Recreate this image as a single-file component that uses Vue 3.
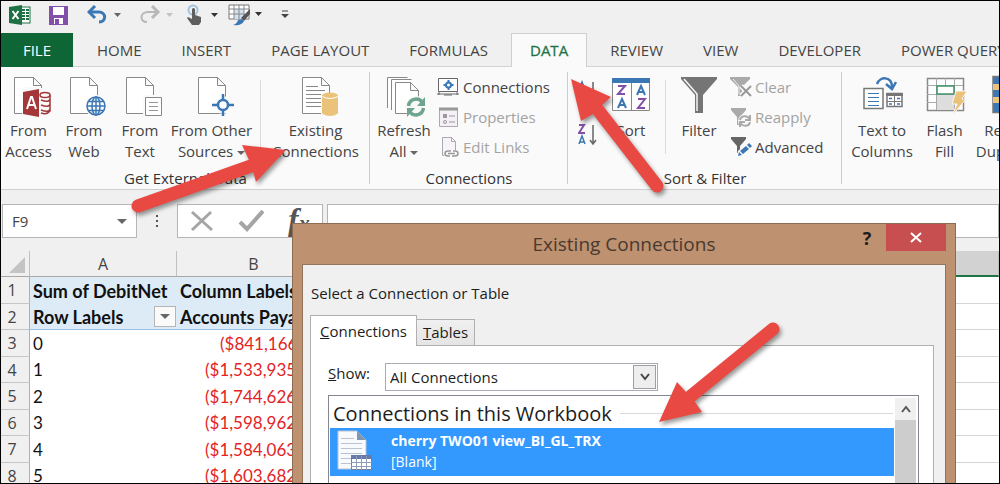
<script setup>
import { ref } from 'vue'

const tabNames = ['HOME', 'INSERT', 'PAGE LAYOUT', 'FORMULAS', 'DATA', 'REVIEW', 'VIEW', 'DEVELOPER', 'POWER QUERY']
const activeTab = ref('DATA')
const cellName = ref('F9')
const formula = ref('')
const show = ref('All Connections')
const rows = [
  { n: 3, a: '0', b: '($841,166.34)' },
  { n: 4, a: '1', b: '($1,533,935.12)' },
  { n: 5, a: '2', b: '($1,744,626.40)' },
  { n: 6, a: '3', b: '($1,598,962.08)' },
  { n: 7, a: '4', b: '($1,584,063.51)' },
  { n: 8, a: '5', b: '($1,603,682.77)' }
]
</script>

<template>
  <div class="window">
    <header class="quick">
      <svg class="q-logo" width="22" height="20" viewBox="0 0 22 20">
        <rect x="11" y="2" width="10" height="16" fill="#fff" stroke="#1e7145" />
        <path d="M13 5h3M17 5h3M13 8h3M17 8h3M13 11h3M17 11h3M13 14h3M17 14h3" stroke="#1e7145" stroke-width="2" />
        <path d="M0 2 13 0v20L0 18z" fill="#1e7145" />
        <path d="M3.500 6 9.500 14M9.500 6 3.500 14" stroke="#fff" stroke-width="2" />
      </svg>
      <button class="q-btn q-save" aria-label="Save">
        <svg width="19" height="19" viewBox="0 0 19 19">
          <path d="M0 0h19v19H0z" fill="#8250a8" />
          <path d="M4 1h11v8H4z" fill="#fff" />
          <path d="M5 12h9v6H5z" fill="#fff" /><path d="M6 13h4v5H6z" fill="#8250a8" />
        </svg>
      </button>
      <button class="q-btn q-undo" aria-label="Undo">
        <svg width="34" height="20" viewBox="0 0 34 20">
          <path d="M3 7h9c7 0 8 10 0 10" fill="none" stroke="#3b77b5" stroke-width="3" />
          <path d="M8 1 2 7l6 6" fill="none" stroke="#3b77b5" stroke-width="3" />
          <path d="M27 8h7l-3.500 4z" fill="#666" />
        </svg>
      </button>
      <button class="q-btn q-redo" aria-label="Redo">
        <svg width="34" height="20" viewBox="0 0 34 20">
          <path d="M17 7H9C1 7 0 17 8 17" fill="none" stroke="#b8b8b8" stroke-width="2" />
          <path d="m13 1 6 6-6 6" fill="none" stroke="#b8b8b8" stroke-width="3" />
          <path d="M27 8h7l-3.500 4z" fill="#c4c4c4" />
        </svg>
      </button>
      <button class="q-btn q-touch" aria-label="Touch mode">
        <svg width="32" height="22" viewBox="0 0 32 22">
          <circle cx="7" cy="6" r="4.500" fill="none" stroke="#9fc3e3" stroke-width="2" />
          <path d="M6 5q1.500-2 3 0v6l6 2v5l-2 3H6L1 14l1-1 4 2z" fill="#5f5f5f" />
          <path d="M25 9h7l-3.500 4z" fill="#333" />
        </svg>
      </button>
      <button class="q-btn q-table" aria-label="Table design">
        <svg width="34" height="22" viewBox="0 0 34 22">
          <path d="M1 1h20v14H1z" fill="#fff" stroke="#777" />
          <path d="M6 5h10v10H6z" fill="#cfe0f0" />
          <path d="M1 5h20M1 10h16M6 1v14M11 1v14M16 1v12" stroke="#888" fill="none" />
          <path d="m13 14 9-9v5l-6 7z" fill="#555" />
          <path d="M5 21q4-1 5-5 5-2 6 1-2 5-11 4z" fill="#3b77b5" />
          <path d="M27 8h7l-3.500 4z" fill="#333" />
        </svg>
      </button>
      <button class="q-btn q-more" aria-label="Customize toolbar">
        <svg width="8" height="10" viewBox="0 0 8 10"><path d="M1 1h6" stroke="#444" /><path d="M0 4h8L4 8z" fill="#444" /></svg>
      </button>
    </header>

    <nav class="tabs">
      <button class="file">FILE</button>
      <button v-for="t in tabNames" :key="t" class="tab" :class="{ active: t === activeTab }" @click="activeTab = t">{{ t }}</button>
    </nav>

    <section class="ribbon">
      <div class="group g-external">
        <div class="tools">
          <button class="big w-55">
            <svg width="44" height="42" viewBox="0 0 44 42">
              <path class="page" d="M7.500 2.500h19l8 8v28h-27zM26.500 2.500v8h8" />
              <path d="M15 12h29v30H15z" fill="#fafafa" />
              <path class="page" d="M15 2.500h11.500l8 8V13M26.500 2.500v8h8" />
              <ellipse cx="38" cy="20" rx="5" ry="2.500" fill="none" stroke="#a4373a" stroke-width="1.500" />
              <path d="M34 25q8 3 9-1M34 30q8 3 9-1M34 35q8 3 9-1M43 20v16q-3 4-9 2" fill="none" stroke="#a4373a" stroke-width="1.500" />
              <path d="m16 17 16-3v28l-16-3z" fill="#a4373a" />
              <path d="m20 34 4-12h1l4 12M21.500 30h6" fill="none" stroke="#fff" stroke-width="2" />
            </svg>From<br>Access
          </button>
          <button class="big w-56">
            <svg width="44" height="42" viewBox="0 0 44 42">
              <path class="page" d="M8.500 2.500h19l8 8v28h-27zM27.500 2.500v8h8" />
              <circle cx="34" cy="31" r="11" fill="#fafafa" />
              <g fill="none" stroke="#3b77b5" stroke-width="1.500"><circle cx="34" cy="31" r="9" /><ellipse cx="34" cy="31" rx="4" ry="9" /><path d="M34 22v18M25 31h18M26 26.500h16M26 35.500h16" /></g>
            </svg>From<br>Web
          </button>
          <button class="big w-56">
            <svg width="44" height="42" viewBox="0 0 44 42">
              <path class="page" d="M8.500 2.500h19l8 8v28h-27zM27.500 2.500v8h8" />
              <path d="M25 20h19v22H25z" fill="#fafafa" />
              <path class="page" d="M27.500 22.500h16v18h-16z" />
              <path d="M31 27.500h9M31 31.500h9M31 35.500h9" stroke="#999" />
            </svg>From<br>Text
          </button>
          <button class="big w-87">
            <svg width="44" height="42" viewBox="0 0 44 42">
              <path class="page" d="M8.500 2.500h19l8 8v28h-27zM27.500 2.500v8h8" />
              <circle cx="33" cy="30" r="9" fill="#fafafa" />
              <path d="M33 19v6M33 35v6M22 30h6M38 30h6" stroke="#3b77b5" stroke-width="2.500" />
              <circle cx="33" cy="30" r="5" fill="#fff" stroke="#3b77b5" stroke-width="2.500" />
            </svg>From Other<br>Sources <i class="caret"></i>
          </button>
          <span class="rule"></span>
          <button class="big w-99">
            <svg width="44" height="42" viewBox="0 0 44 42">
              <path class="page" d="M8.500 2.500h19l8 8v28h-27zM27.500 2.500v8h8" />
              <path d="M12 11.500h12M12 15.500h19M12 19.500h19M12 23.500h16M12 27.500h16M12 31.500h16" stroke="#888" />
              <path d="M27 18h17v24H27z" fill="#fafafa" />
              <path d="M28 20.500v18q8 5 16 0v-18z" fill="#eac27a" />
              <ellipse cx="36" cy="20.500" rx="8" ry="3" fill="#eac27a" />
              <path d="M28 21.500q8 4 16 0" fill="none" stroke="#fff" />
            </svg>Existing<br>Connections
          </button>
        </div>
        <h2>Get External Data</h2>
      </div>

      <div class="group g-conn">
        <div class="tools">
          <button class="big w-58">
            <svg width="44" height="42" viewBox="0 0 44 42">
              <path d="M5.500 33V2.500h20M9.500 35V4.500h20" class="page" />
              <path class="page" d="M13.500 7.500h15l8 8v23h-23zM28.500 7.500v8h8" />
              <circle cx="34" cy="32" r="11" fill="#fafafa" />
              <g fill="none" stroke="#6fa58e" stroke-width="3.500"><path d="M26.500 31c1-8 11-9 14-3M41.500 33c-1 8-11 9-14 3" /></g>
              <path d="M43 22v9h-8zM25 42v-9h8z" fill="#6fa58e" />
            </svg>Refresh<br>All <i class="caret"></i>
          </button>
          <div class="smalls">
            <button class="small">
              <svg width="22" height="22" viewBox="0 0 22 22"><path d="M1.500 2.500h19v13h-19z" fill="#fff" stroke="#666" /><path d="M0 18h22M2 16v3M20 16v3M7 19h8" stroke="#666" /><circle cx="11.500" cy="9" r="2.500" fill="none" stroke="#3b77b5" stroke-width="2" /><path d="M11.500 4v2M11.500 12v2M6.500 9h2M14.500 9h2" stroke="#3b77b5" stroke-width="2" /></svg>
              Connections
            </button>
            <button class="small" disabled>
              <svg width="22" height="22" viewBox="0 0 22 22"><path d="M2.500 2.500h18v18h-18z" fill="#f5eff7" stroke="#aaa" /><path d="M2 3h19" stroke="#999" stroke-width="3" /><path d="M12 10h6M12 16h6" stroke="#999" stroke-width="1" /><path d="M6 8h4v4H6z" fill="#999" /><circle cx="8" cy="16" r="1.500" fill="none" stroke="#999" /></svg>
              Properties
            </button>
            <button class="small" disabled>
              <svg width="22" height="22" viewBox="0 0 22 22"><path d="M5.500 1.500h9l4 4v14h-13zM14.500 1.500v4h4" fill="#f8f2fa" stroke="#aaa" /><path d="M7 14h15v7H7z" fill="#fafafa" /><g fill="none" stroke="#999" stroke-width="1.500"><path d="M14 15h-3q-3 0-3 2.500t3 2.500h2" /><path d="M15 20h3q3 0 3-2.500t-3-2.500h-2M11 17.500h7" /></g></svg>
              Edit Links
            </button>
          </div>
        </div>
        <h2>Connections</h2>
      </div>

      <div class="group g-sort">
        <div class="tools">
          <div class="pair">
            <button class="az" aria-label="Sort A to Z">
              <svg width="20" height="24" viewBox="0 0 20 24"><path d="M1 10 4 2l3 8M2 8h4" fill="none" stroke="#3b77b5" stroke-width="1.500" /><path d="M1 13h5l-5 8h6" fill="none" stroke="#8250a8" stroke-width="1.500" /><path d="M15 2v18M12 17l3 4 3-4" fill="none" stroke="#666" stroke-width="1.500" /></svg>
            </button>
            <button class="az" aria-label="Sort Z to A">
              <svg width="20" height="24" viewBox="0 0 20 24"><path d="M1 3h5l-5 8h6" fill="none" stroke="#8250a8" stroke-width="2" /><path d="M1 22l3-8 3 8M2 20h4" fill="none" stroke="#3b77b5" stroke-width="1.500" /><path d="M15 3v18M12 18l3 4 3-4" fill="none" stroke="#666" stroke-width="1.500" /></svg>
            </button>
          </div>
          <button class="big w-58">
            <svg width="44" height="42" viewBox="0 0 44 42">
              <path d="M3.500 4.500h37v31h-37zM22.500 8v28" fill="#fff" stroke="#888" />
              <path d="M3 3h38v5H3z" fill="#3b77b5" />
              <g fill="none" stroke-width="2"><path d="M9 11h7l-7 8h7M29 24h7l-7 9h7" stroke="#8250a8" /><path d="m9 33 4-9 4 9M10 30h6M28 20l4-9 4 9M29 17h6" stroke="#3b77b5" /></g>
            </svg>Sort
          </button>
          <span class="rule"></span>
          <button class="big w-56">
            <svg width="44" height="42" viewBox="0 0 44 42">
              <path d="M4 2h36v2L26 20v18h-8V20L4 4z" fill="#757575" />
              <path d="m7 4 13 15v17" stroke="#f5f5f5" stroke-width="1.500" fill="none" />
            </svg>Filter
          </button>
          <div class="smalls">
            <button class="small" disabled>
              <svg width="22" height="22" viewBox="0 0 22 22"><path d="M0 1h20v2l-8 8v9H8v-9L0 3z" fill="#aaa" /><path d="m3 3 6 7v8" stroke="#eee" fill="none" /><path d="m11 10 10 10M21 10 11 20" stroke="#fafafa" stroke-width="5" /><path d="m11 10 10 10M21 10 11 20" stroke="#999" stroke-width="2" /></svg>
              Clear
            </button>
            <button class="small" disabled>
              <svg width="22" height="22" viewBox="0 0 22 22"><path d="M1 2h15v2l-6 7v8H7v-8L1 4z" fill="#aaa" /><circle cx="15" cy="15" r="7" fill="#fafafa" /><path d="M10 14c1-5 8-5 10 0M20 9v5h-5M20 16c-1 5-8 5-10 0M10 21v-5h5" stroke="#aaa" stroke-width="2" fill="none" /></svg>
              Reapply
            </button>
            <button class="small">
              <svg width="22" height="22" viewBox="0 0 22 22"><path d="M1 1h15v2l-6 7v7H7v-7L1 3z" fill="#666" /><path d="m7 20 1-5 9-8 4 3-9 9z" fill="#fafafa" /><path d="m8 20 1-4 3 3zM10 15l6-5 3 3-6 5zM17 9l2-2 3 3-2 2z" fill="#3b77b5" /></svg>
              Advanced
            </button>
          </div>
        </div>
        <h2>Sort &amp; Filter</h2>
      </div>

      <div class="group g-data">
        <div class="tools">
          <button class="big w-72">
            <svg width="44" height="42" viewBox="0 0 44 42">
              <path d="M4 13.500h19v20H4z" fill="#fff" stroke="#777" stroke-width="1.500" />
              <path d="M8 18.500h11M8 22.500h11M8 26.500h11M8 30.500h11" stroke="#3b77b5" />
              <path d="M27 18.500h15v13H27z" fill="#fff" stroke="#777" stroke-width="1.500" /><path d="M26 18h17v3H26z" fill="#777" />
              <path d="M34.500 20v12M27 26.500h15" stroke="#777" /><path d="M29 23.500h3M37 23.500h3M29 29h3M37 29h3" stroke="#3b77b5" stroke-width="1.500" />
              <path d="M17 9c3-8 15-8 15 3M26 9l6 5 4-7" fill="none" stroke="#3b77b5" stroke-width="2.500" />
            </svg>Text to<br>Columns
          </button>
          <button class="big w-53">
            <svg width="44" height="42" viewBox="0 0 44 42">
              <path d="M4.500 3.500h36v32h-36z" fill="#fff" stroke="#888" stroke-width="1.500" />
              <path d="M4 10.500h36M4 19.500h36M4 27.500h36M13.500 3v32M31.500 3v32M22.500 3v7" stroke="#aaa" fill="none" />
              <path d="M14 20h17v15H14z" fill="#ddd" /><path d="M14 11h17v8H14z" fill="#fff" stroke="#3f9268" stroke-width="1.500" />
              <path d="M33 16h11l-5 8h4L29 41l5-12h-5z" fill="#eac27a" stroke="#fafafa" />
            </svg>Flash<br>Fill
          </button>
          <button class="big w-83">
            <svg width="44" height="42" viewBox="0 0 44 42">
              <path d="M2 1.500h40v36H2z" fill="#3b77b5" stroke="#777" stroke-width="1.500" />
              <path d="M2 9h16v6H2zM2 22h16v6H2z" fill="#eac27a" />
            </svg>Remove<br>Duplicates
          </button>
        </div>
      </div>
    </section>

    <section class="formula-bar">
      <div class="name-box">
        <input v-model="cellName" aria-label="Name box">
        <i class="caret"></i>
      </div>
      <svg class="dots" width="40" height="34" viewBox="0 0 40 34"><path d="M19 11h2v2h-2zM19 16h2v2h-2zM19 21h2v2h-2z" fill="#555" /></svg>
      <div class="edit-box">
        <button aria-label="Cancel"><svg width="24" height="22" viewBox="0 0 24 22"><path d="M2 2 22 20M21 2 2 20" stroke="#a5a5a5" stroke-width="3" /></svg></button>
        <button aria-label="Enter"><svg width="26" height="22" viewBox="0 0 26 22"><path d="m2 12 7 7L25 1" fill="none" stroke="#a5a5a5" stroke-width="4" /></svg></button>
        <button class="fx" aria-label="Insert function">f<small>x</small></button>
      </div>
      <input v-model="formula" class="formula" aria-label="Formula">
    </section>

    <table class="sheet">
      <thead>
        <tr>
          <th class="corner"><svg width="16" height="16" viewBox="0 0 16 16"><path d="M16 0v16H0z" fill="#c4c4c4" /></svg></th>
          <th class="col-a">A</th>
          <th class="col-b">B</th>
          <th class="rest"></th>
        </tr>
      </thead>
      <tbody>
        <tr class="pivot">
          <th>1</th><td>Sum of DebitNet</td><td>Column Labels</td><td></td>
        </tr>
        <tr class="pivot">
          <th>2</th>
          <td><div class="label-cell">Row Labels<button class="drop" aria-label="Filter rows"><i class="caret"></i></button></div></td>
          <td>Accounts Payable</td><td></td>
        </tr>
        <tr v-for="r in rows" :key="r.n">
          <th>{{ r.n }}</th><td>{{ r.a }}</td><td class="neg">{{ r.b }}</td><td></td>
        </tr>
      </tbody>
    </table>

    <div class="dialog" role="dialog" aria-label="Existing Connections">
      <div class="title-bar">
        <h1>Existing Connections</h1>
        <div class="title-actions">
          <button class="help" aria-label="Help">?</button>
          <button class="close" aria-label="Close"><svg width="12" height="11" viewBox="0 0 12 11"><path d="m1 1 10 9M11 1 1 10" stroke="#fff" stroke-width="2" /></svg></button>
        </div>
      </div>
      <div class="panel">
        <p>Select a Connection or Table</p>
        <div class="dlg-tabs">
          <button class="dlg-tab on"><u>C</u>onnections</button>
          <button class="dlg-tab"><u>T</u>ables</button>
        </div>
        <div class="tab-page">
          <div class="show-row">
            <label for="show"><u>S</u>how:</label>
            <div class="picker">
              <select id="show" v-model="show"><option>All Connections</option></select>
              <span class="picker-arrow"><svg width="10" height="8" viewBox="0 0 10 8"><path d="m1 1 4 5 4-5" fill="none" stroke="#444" stroke-width="2" /></svg></span>
            </div>
          </div>
          <div class="list">
            <div class="items">
              <h3>Connections in this Workbook</h3>
              <button class="item">
                <svg width="36" height="42" viewBox="0 0 36 42">
                  <path d="M1 1h19l9 9v29H1z" fill="#f8fafd" stroke="#b8c4d4" /><path d="M20 1v9h9z" fill="#7f95b2" />
                  <path d="M4 8.500h13M4 13.500h21M4 18.500h21M4 23.500h21M4 28.500h10M4 33.500h10" stroke="#b9c3d3" />
                  <path d="M14.500 25.500h20v14h-20z" fill="#fff" stroke="#6f7f9a" /><path d="M14 25h21v4H14z" fill="#6679a8" />
                  <path d="M19.500 26v14M24.500 26v14M29.500 26v14M14 32.500h21M14 36.500h21" stroke="#8f9cb5" />
                </svg>
                <span class="item-text"><b>cherry TWO01 view_BI_GL_TRX</b><span>[Blank]</span></span>
              </button>
            </div>
            <div class="scroll">
              <button aria-label="Scroll up"><svg width="10" height="8" viewBox="0 0 10 8"><path d="m1 7 4-5 4 5" fill="none" stroke="#555" stroke-width="2" /></svg></button>
              <div class="thumb"></div>
            </div>
          </div>
        </div>
      </div>
    </div>

    <svg class="arrows" width="1000" height="484" viewBox="0 0 1000 484">
      <g fill="#e84a43" stroke="#e84a43" stroke-width="13" stroke-linecap="round">
        <path d="M138 206 251 166" /><path stroke="none" d="m286 150-44-5 7 15 4 11 3 11z" />
        <path d="M657 186 598 110" /><path stroke="none" d="m571 79 40 18-9 8-9 9-12 7z" />
        <path d="M773 329 691 396" /><path stroke="none" d="m659 422 18-40 9 10 9 10 7 10z" />
      </g>
    </svg>
  </div>
</template>

<style>
html, body { margin: 0; }
</style>

<style scoped>
* { box-sizing: border-box; }
.window {
  position: relative;
  display: flex;
  flex-direction: column;
  height: 100vh;
  overflow: hidden;
  border: 1px solid #000;
  background: #f0f0f0;
  color: #444;
  font: 15px/21px "Open Sans", "Noto Sans", sans-serif;
}
button { padding: 0; border: 0; background: none; color: inherit; font: inherit; white-space: nowrap; }
input, select { font: inherit; color: inherit; }
h1, h2, h3, p { margin: 0; font-weight: 400; }
svg { display: block; flex: none; }

.quick { display: flex; align-items: center; flex: none; height: 32px; padding: 0 8px 4px; }
.q-save { margin-left: 18px; }
.q-undo { margin-left: 19px; }
.q-redo { margin-left: 18px; }
.q-touch { margin-left: 13px; }
.q-table { margin-left: 10px; }
.q-more { margin-left: 19px; }

.tabs { display: flex; flex: none; height: 34px; overflow: hidden; box-shadow: inset 0 -1px #d2d2d2; }
.file { flex: none; width: 72px; background: #0e6636; color: #fff; }
.tab { flex: none; padding: 0 19px; border: 1px solid transparent; }
.file + .tab { margin-left: 4px; }
.tab.active { margin: 0 3px; padding: 0 18px; border-color: #cfcfcf; border-bottom: 0; background: #fafafa; color: #217346; -webkit-text-stroke: 0.3px; }

.ribbon { display: flex; flex: none; height: 123px; overflow: hidden; border-bottom: 1px solid #cfcfcf; background: #fafafa; }
.group { display: flex; flex-direction: column; flex: none; position: relative; padding-top: 8px; }
.group:not(.g-data)::after { content: ""; position: absolute; right: 0; top: 5px; bottom: 5px; width: 1px; background: #cbcbcb; }
.g-external { width: 369px; }
.g-conn { width: 198px; }
.g-sort { width: 274px; }
.tools { display: flex; height: 93px; }
.g-conn .tools { padding-left: 5px; }
.g-sort .tools { padding-left: 10px; }
.g-data .tools { padding-left: 4px; }
.group h2 { font-size: 15px; line-height: 20px; text-align: center; color: #333; }
.big { display: block; flex: none; align-self: flex-start; text-align: center; }
.big svg { margin: 0 auto 3px; }
.w-53 { width: 53px; } .w-55 { width: 55px; } .w-56 { width: 56px; } .w-58 { width: 58px; }
.w-72 { width: 72px; } .w-83 { width: 83px; } .w-87 { width: 87px; } .w-99 { width: 99px; }
.page { fill: #fff; stroke: #888; stroke-width: 1; }
.caret { display: inline-block; vertical-align: middle; border: 4px solid transparent; border-top-color: #666; border-bottom: 0; }
.rule { flex: none; width: 1px; height: 74px; margin: 5px 5px 0; background: #dcdcdc; }
.smalls { display: flex; flex-direction: column; margin-top: -3px; }
.small { display: flex; align-items: center; gap: 4px; height: 30px; padding-left: 4px; }
.g-sort .small { padding-left: 3px; gap: 3px; }
.small:disabled { color: #a3a3a3; }
.pair { display: flex; flex-direction: column; gap: 18px; width: 24px; padding-top: 5px; }
.az { width: 20px; height: 24px; }

.formula-bar { display: flex; flex: none; height: 34px; margin: 14px 0 13px 1px; }
.name-box { display: flex; align-items: center; width: 135px; padding: 0 9px; border: 1px solid #b5b5b5; background: #fff; }
.name-box input { flex: 1; min-width: 0; padding: 0; border: 0; outline: 0; }
.name-box .caret { border-width: 5px 5px 0; }
.edit-box { display: flex; align-items: center; width: 146px; padding-left: 12px; gap: 24px; border: 1px solid #b5b5b5; background: #fff; }
.edit-box .fx { font: italic bold 32px/30px "Liberation Serif", serif; color: #555; }
.fx small { font-size: 22px; }
.formula { flex: 1; min-width: 0; margin-left: 4px; border: 1px solid #b5b5b5; background: #fff; outline: 0; }

.sheet { flex: none; width: 100%; table-layout: fixed; border-collapse: separate; border-spacing: 0; background: #fff; color: #111; font: 17px/24px Lato, "Open Sans", sans-serif; }
.sheet th { font: 400 16px/24px "Open Sans", sans-serif; color: #444; background: #f0f0f0; padding: 0; }
.sheet thead th { height: 26px; border-right: 1px solid #c0c0c0; border-bottom: 1px solid #a8a8a8; }
.sheet .corner { width: 29px; }
.corner svg { margin: 2px 0 0 8px; }
.sheet .col-a { width: 147px; }
.sheet .col-b { width: 154px; }
.sheet thead .rest { background: #d2d2d2; border-bottom: 2px solid #217346; }
tbody tr { height: 26px; }
tbody tr:nth-child(odd) { height: 27px; }
.sheet tbody th { border-right: 1px solid #b0b0b0; border-bottom: 1px solid #c6c6c6; padding-right: 6px; }
td { padding: 0 0 0 3px; overflow: hidden; white-space: nowrap; }
td:last-child { border-bottom: 1px solid #d6d6d6; }
.pivot td:not(:last-child) { background: #ddebf7; font-weight: 700; font-size: 18px; }
.pivot:nth-child(2) td:not(:last-child) { border-bottom: 1px solid #9bc2e6; }
.label-cell { display: flex; justify-content: space-between; align-items: center; }
.drop { display: grid; place-items: center; width: 22px; height: 21px; margin-right: 1px; border: 1px solid #b5b5b5; background: #fafafa; }
.drop .caret { border-width: 5px 5px 0; }
.sheet .neg { padding-left: 28px; color: #e3241f; text-align: left; }
tbody tr:nth-child(3) .neg { padding-left: 43px; }

.dialog { position: absolute; left: 291px; right: 43px; top: 222px; bottom: 0; display: flex; flex-direction: column; padding: 0 9px; border: 1px solid #8d6c54; border-bottom: 0; background: #be9170; }
.title-bar { display: flex; flex: none; height: 40px; align-items: center; position: relative; }
.title-bar h1 { flex: 1; text-align: center; font-size: 19px; line-height: 40px; color: #493a2f; }
.title-actions { position: absolute; right: 0; top: 0; display: flex; }
.help { width: 38px; height: 28px; font-weight: 700; font-size: 18px; color: #1c1c1c; }
.close { display: grid; place-items: center; width: 60px; height: 27px; background: #c84f50; }
.panel { flex: 1; min-height: 0; display: flex; flex-direction: column; padding: 18px 11px 0 7px; border: 1px solid #94745c; border-bottom: 0; background: #f0f0f0; color: #1d1d1d; }
.panel p { padding-left: 1px; }
.dlg-tabs { display: flex; align-items: flex-end; height: 30px; margin-top: 11px; }
.dlg-tab { height: 26px; width: 58px; border: 1px solid #b0b0b0; border-left: 0; border-bottom: 0; background: linear-gradient(#f0f0f0, #e4e4e4); }
.dlg-tab.on { position: relative; height: 31px; width: 107px; margin-bottom: -1px; border-left: 1px solid #b0b0b0; background: #fff; }
.tab-page { flex: 1; min-height: 0; display: flex; flex-direction: column; padding: 17px 14px 0 17px; border: 1px solid #b0b0b0; border-bottom: 0; background: #fff; }
.show-row { display: flex; }
.show-row label { width: 57px; }
.picker { position: relative; width: 273px; height: 28px; }
.picker select { appearance: none; display: block; width: 100%; height: 28px; padding: 0 0 0 4px; border: 1px solid #a9adb3; border-radius: 0; background: #fff; }
.picker-arrow { position: absolute; right: 2px; top: 2px; display: grid; place-items: center; width: 23px; height: 24px; border: 1px solid #a0a0a0; background: #eee; pointer-events: none; }
.list { flex: 1; display: flex; min-height: 0; margin-top: 4px; padding: 2px 2px 0 1px; border: 1px solid #828790; border-bottom: 0; }
.items { flex: 1; min-width: 0; }
.items h3 { display: flex; align-items: center; gap: 8px; height: 30px; padding: 0 1px 0 3px; font-size: 20px; }
.items h3::after { content: ""; flex: 1; height: 1px; background: #d9d9d9; }
.item { display: flex; align-items: flex-start; gap: 18px; width: 100%; height: 48px; padding: 2px 7px; background: #39f; color: #fff; font-size: 14px; text-align: left; }
.item-text { display: flex; flex-direction: column; }
.scroll { display: flex; flex-direction: column; width: 21px; margin-left: 1px; }
.scroll button { display: grid; place-items: center; height: 22px; background: #f0f0f0; }
.thumb { flex: 1; background: #cdcdcd; }
.arrows { position: absolute; left: -1px; top: -1px; pointer-events: none; filter: drop-shadow(2px 3px 2px rgba(0, 0, 0, 0.4)); }
</style>
